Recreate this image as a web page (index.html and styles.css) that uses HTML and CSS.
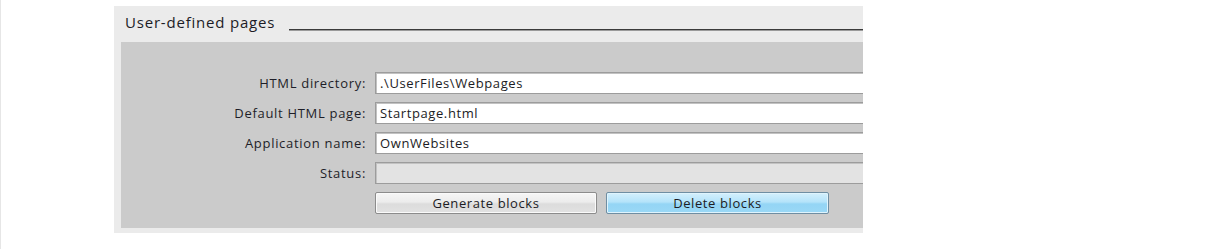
FILE: index.html
```html
<!DOCTYPE html>
<html>
<head>
<meta charset="utf-8">
<link rel="stylesheet" href="styles.css">
</head>
<body>
<div class="page">
  <section class="group">
    <header class="group-header">
      <span class="group-title">User-defined pages</span>
      <span class="group-rule"></span>
    </header>
    <div class="group-body">
      <div class="form">
        <label class="label">HTML directory:</label>
        <div class="field">.\UserFiles\Webpages</div>
        <label class="label">Default HTML page:</label>
        <div class="field">Startpage.html</div>
        <label class="label">Application name:</label>
        <div class="field">OwnWebsites</div>
        <label class="label">Status:</label>
        <div class="field field-disabled"></div>
        <span class="label"></span>
        <div class="buttons">
          <button class="btn">Generate blocks</button>
          <button class="btn btn-active">Delete blocks</button>
        </div>
      </div>
    </div>
  </section>
</div>
</body>
</html>
```
FILE: styles.css
```css
html, body {
  margin: 0;
  padding: 0;
  background: #ffffff;
}
body {
  font-family: "Open Sans", "DejaVu Sans", sans-serif;
  color: #1e1e26;
  border-left: 1px solid #e6e6e6;
  height: 249px;
  box-sizing: border-box;
}
.page {
  padding: 6px 0 0 113px;
}
.group {
  width: 749px;
  background: #ebebeb;
  padding-bottom: 5px;
}
.group-header {
  display: flex;
  align-items: flex-start;
  height: 36px;
}
.group-title {
  font-size: 15px;
  letter-spacing: 0.8px;
  line-height: 18px;
  margin: 7px 0 0 11px;
  color: #1c1c26;
}
.group-rule {
  flex: 1;
  margin: 23px 0 0 14px;
  height: 1px;
  background: #3a3a3a;
  box-shadow: 0 1px 0 #9a9a9a;
}
.group-body {
  margin-left: 7px;
  background: #cbcbcb;
  padding: 30px 0 14px 0;
}
.form {
  display: grid;
  grid-template-columns: 245px 1fr;
  grid-auto-rows: 22px;
  column-gap: 9px;
  row-gap: 8px;
}
.label {
  font-size: 13px;
  letter-spacing: 0.7px;
  line-height: 22px;
  text-align: right;
  color: #1e1e28;
}
.field {
  box-sizing: border-box;
  background: #ffffff;
  border: 1px solid #9c9c9c;
  border-right: none;
  box-shadow: inset 0 1px 0 #c2c2c2, inset 1px 0 0 #c2c2c2;
  font-size: 13px;
  letter-spacing: 0.6px;
  line-height: 20px;
  padding-left: 4px;
  color: #1c1c24;
}
.field-disabled {
  background: #e3e3e3;
}
.buttons {
  display: flex;
  gap: 9px;
}
.btn {
  box-sizing: border-box;
  height: 22px;
  border: 1px solid #8c8c8c;
  border-radius: 2px;
  font-family: inherit;
  font-size: 13px;
  letter-spacing: 0.6px;
  color: #1c1c24;
  padding: 0;
  background: linear-gradient(#f6f6f6 0%, #ececec 45%, #dcdcdc 55%, #e2e2e2 100%);
  box-shadow: inset 0 0 0 1px #fafafa;
}
.btn:first-child {
  width: 222px;
}
.btn-active {
  width: 223px;
  border-color: #6f8ea3;
  background: linear-gradient(#d4f0fd 0%, #b4e3fa 45%, #94d5f5 55%, #9ad8f6 100%);
  box-shadow: inset 0 0 0 1px #dff4fd;
}
```
